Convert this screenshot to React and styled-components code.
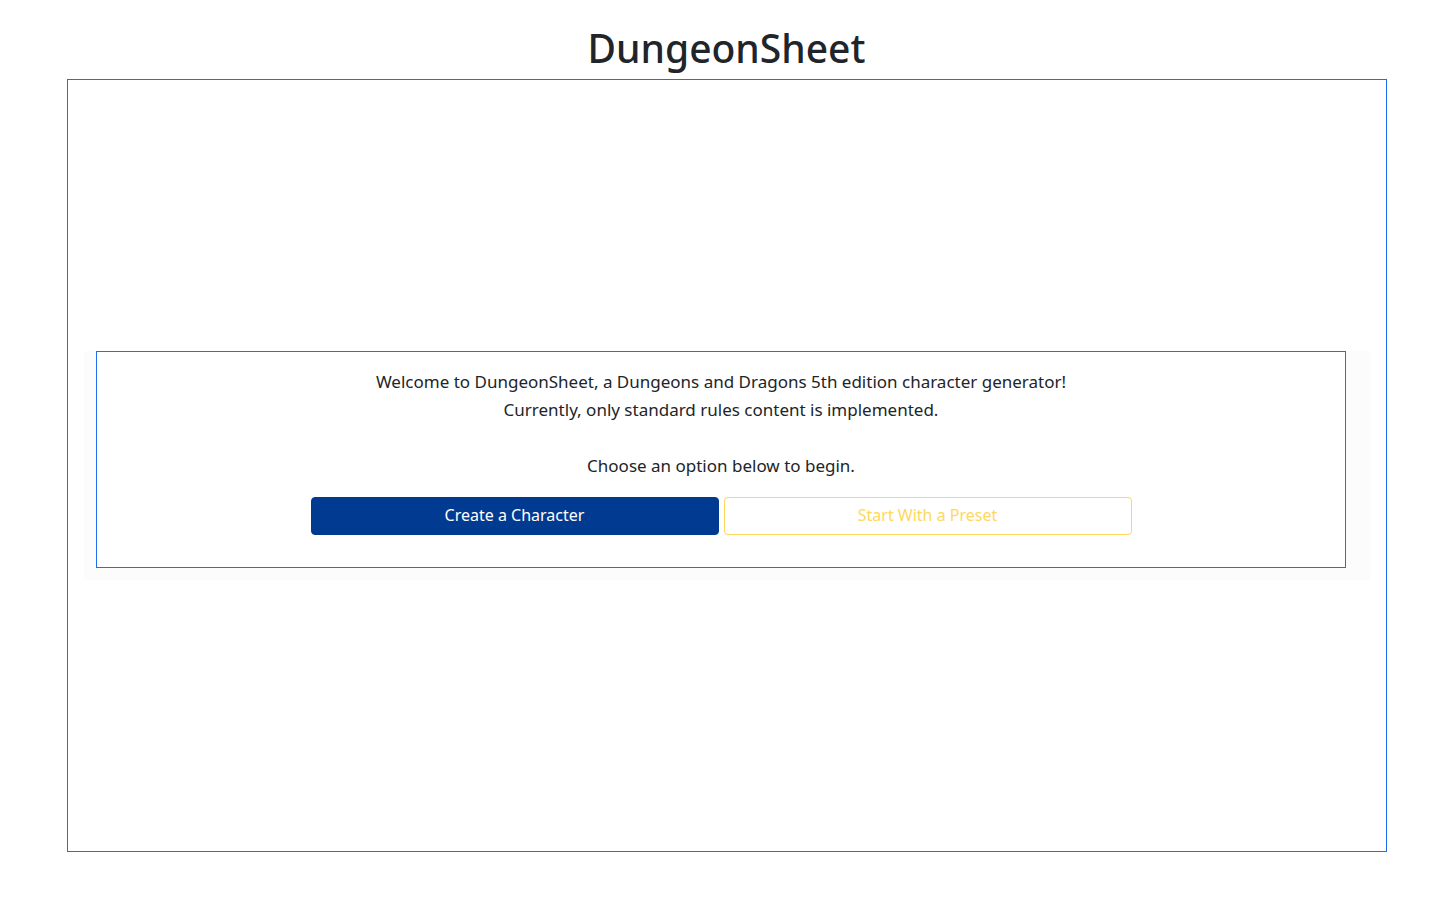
import React from "react";
import styled, { createGlobalStyle } from "styled-components";

const GlobalStyle = createGlobalStyle`
  body {
    margin: 0;
    background: #fff;
    font-family: "Noto Sans", "Open Sans", sans-serif;
    color: #212529;
  }
`;

function App() {
  return (
    <Page>
      <GlobalStyle />
      <Title>DungeonSheet</Title>
      <Frame>
        <Shade>
          <Card>
            <Line>Welcome to DungeonSheet, a Dungeons and Dragons 5th edition character generator!</Line>
            <Line>Currently, only standard rules content is implemented.</Line>
            <Line>&nbsp;</Line>
            <Line>Choose an option below to begin.</Line>
            <ButtonRow>
              <Button $variant="primary">Create a Character</Button>
              <Button $variant="warning">Start With a Preset</Button>
            </ButtonRow>
          </Card>
        </Shade>
      </Frame>
    </Page>
  );
}

const Page = styled.div`
  width: 1445px;
  height: 899px;
  box-sizing: border-box;
`;

const Title = styled.h1`
  margin: 24px 0 7px;
  padding-left: 8px;
  font-size: 39px;
  line-height: 48px;
  font-weight: 500;
  text-align: center;
  color: #212529;
`;

const Frame = styled.div`
  margin-left: 67px;
  width: 1320px;
  height: 773px;
  box-sizing: border-box;
  border: 1px solid #1f6feb;
  padding: 0 16px;
  display: flex;
  align-items: center;
`;

const Shade = styled.div`
  flex: 1;
  background: #fcfcfc;
  padding: 0 24px 12px 12px;
`;

const Card = styled.div`
  background: #fff;
  border: 1px solid #1f6feb;
  padding: 16px 0 32px;
  text-align: center;
`;

const Line = styled.div`
  font-size: 17px;
  line-height: 28px;
`;

const ButtonRow = styled.div`
  display: flex;
  justify-content: center;
  gap: 5px;
  margin-top: 17px;
`;

const Button = styled.button`
  width: 408px;
  height: 38px;
  padding: 0 0 2px;
  border-radius: 4px;
  font-family: "Noto Sans", "Open Sans", sans-serif;
  font-size: 16px;
  cursor: pointer;
  border: 1px solid ${(p) => (p.$variant === "primary" ? "#003b91" : "#ffd75d")};
  background: ${(p) => (p.$variant === "primary" ? "#003b91" : "#fff")};
  color: ${(p) => (p.$variant === "primary" ? "#fff" : "#ffd75d")};
`;

export default App;
